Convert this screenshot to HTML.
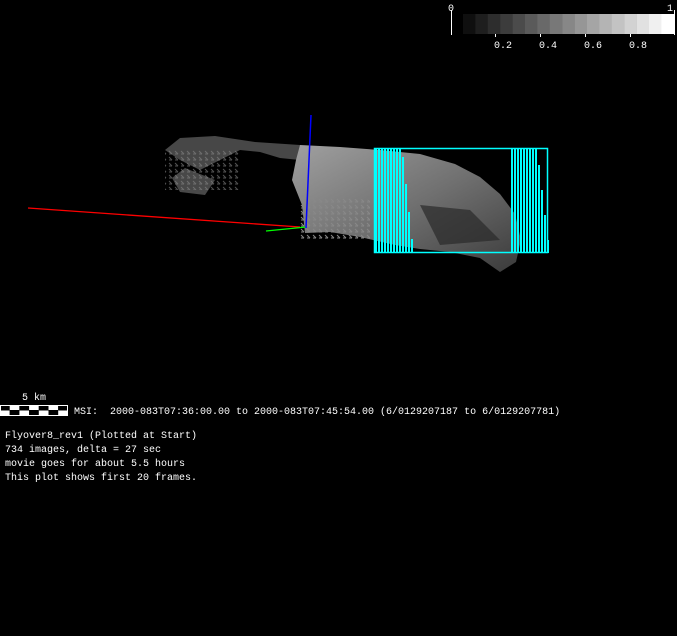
<!DOCTYPE html>
<html><head><meta charset="utf-8"><style>
html,body{margin:0;padding:0;background:#000;width:677px;height:636px;overflow:hidden}
svg{position:absolute;left:0;top:0}
.t{position:absolute;color:#fff;font-family:"Liberation Mono",monospace;font-size:10px;line-height:14px;white-space:pre}
</style></head><body>
<svg width="677" height="636" xmlns="http://www.w3.org/2000/svg">
<defs>
<linearGradient id="g1" x1="0" y1="0" x2="1" y2="1">
<stop offset="0" stop-color="#a0a0a0"/><stop offset="0.5" stop-color="#707070"/><stop offset="1" stop-color="#3a3a3a"/>
</linearGradient>
<pattern id="dots" width="6" height="6" patternUnits="userSpaceOnUse"><path d="M1 1l3 3M1 4h3" stroke="#888" stroke-width="1"/></pattern>
</defs>
<g id="cb"></g>
<line x1="451.5" y1="10" x2="451.5" y2="35" stroke="#fff"/>
<line x1="674.5" y1="10" x2="674.5" y2="35" stroke="#fff"/>
<text x="448" y="11" fill="#fff" font-family="Liberation Mono" font-size="10">0</text>
<text x="667" y="11" fill="#fff" font-family="Liberation Mono" font-size="10">1</text>
<g stroke="#fff"><line x1="495.5" y1="34" x2="495.5" y2="37"/><line x1="540.5" y1="34" x2="540.5" y2="37"/><line x1="585.5" y1="34" x2="585.5" y2="37"/><line x1="630.5" y1="34" x2="630.5" y2="37"/></g>
<g fill="#fff" font-family="Liberation Mono" font-size="10"><text x="494" y="48">0.2</text><text x="539" y="48">0.4</text><text x="584" y="48">0.6</text><text x="629" y="48">0.8</text></g>
<path d="M165,150 L180,138 L215,136 L255,142 L300,145 L300,160 L280,158 L260,152 L240,150 L220,160 L200,170 L180,160 Z" fill="#777" opacity="0.6"/>
<path d="M172,178 L185,168 L215,180 L205,195 L180,192 Z" fill="#666" opacity="0.7"/>
<path d="M165,150 L240,150 L240,190 L165,190Z" fill="url(#dots)" opacity="0.6"/>
<path d="M300,145 L340,147 L380,150 L420,154 L455,164 L480,177 L500,194 L515,214 L521,240 L516,262 L500,272 L480,258 L450,252 L420,249 L395,245 L360,237 L330,232 L305,233 L302,205 L292,180 L296,160 Z" fill="url(#g1)"/>
<path d="M300,195 L370,200 L370,240 L300,240Z" fill="url(#dots)"/>
<path d="M420,205 L470,210 L500,240 L440,245Z" fill="#2a2a2a" opacity="0.7"/>
<line x1="28" y1="208" x2="300" y2="227" stroke="#f00" stroke-width="1.3"/>
<line x1="266" y1="231" x2="306" y2="227" stroke="#0f0" stroke-width="1.3"/>
<line x1="311" y1="115" x2="306" y2="228" stroke="#00f" stroke-width="1.5"/>
<g id="cy" fill="#00ffff"></g>
<rect x="374.5" y="148.5" width="173" height="104" stroke="#0ff" fill="none" stroke-width="1.5"/>
<g id="sb"></g>
<rect x="0.5" y="405.5" width="67" height="10" fill="none" stroke="#fff"/>
</svg>
<div class="t" style="left:22px;top:392px">5 km</div>
<div class="t" style="left:74px;top:406px">MSI:  2000-083T07:36:00.00 to 2000-083T07:45:54.00 (6/0129207187 to 6/0129207781)</div>
<div class="t" style="left:5px;top:430px">Flyover8_rev1 (Plotted at Start)
734 images, delta = 27 sec
movie goes for about 5.5 hours
This plot shows first 20 frames.</div>
<script>
var ns="http://www.w3.org/2000/svg";
function el(p,n,a){var e=document.createElementNS(ns,n);for(var k in a)e.setAttribute(k,a[k]);p.appendChild(e);}
var cb=document.getElementById('cb');
for(var i=0;i<17;i++){var v=Math.round(15+i*240/16);el(cb,'rect',{x:463+i*12.4,y:14,width:12.6,height:20,fill:'rgb('+v+','+v+','+v+')'});}
var cy=document.getElementById('cy');
for(var x=375;x<=411;x+=3){var t=x<=401?0:(x-401)/11;var y=Math.round(148+t*100);el(cy,'rect',{x:x,y:y,width:2,height:253-y});}
for(var x=511;x<=547;x+=3){var t=x<=536?0:(x-536)/12;var y=Math.round(148+t*100);el(cy,'rect',{x:x,y:y,width:2,height:253-y});}
var sb=document.getElementById('sb');
for(var i=0;i<7;i++){el(sb,'rect',{x:i*9.7,y:i%2?405:410,width:9.7,height:5,fill:'#fff'});el(sb,'rect',{x:i*9.7,y:i%2?410:405,width:9.7,height:5.5,fill:'#000'});}
</script>
</body></html>
